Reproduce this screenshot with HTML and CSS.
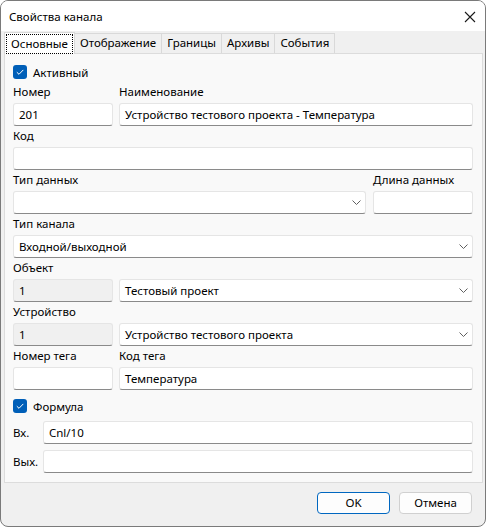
FILE: index.html
```html
<!DOCTYPE html>
<html lang="ru">
<head>
    <meta charset="UTF-8">
    <title>Свойства канала</title>
    <link rel="stylesheet" href="styles.css">
</head>
<body>
    <div class="window">
        <!-- Title bar -->
        <div class="titlebar">
            <span class="title">Свойства канала</span>
            <svg class="close" width="12" height="12" viewBox="0 0 12 12">
                <path d="M1 1 L11 11 M11 1 L1 11" stroke="#1a1a1a" stroke-width="1.1" fill="none"/>
            </svg>
        </div>

        <div class="client">
            <!-- Tabs -->
            <div class="tabs">
                <div class="tab active"><span class="focus">Основные</span></div>
                <div class="tab">Отображение</div>
                <div class="tab">Границы</div>
                <div class="tab">Архивы</div>
                <div class="tab">События</div>
            </div>

            <div class="panel">
                <div class="check">
                    <span class="box"><svg width="14" height="14" viewBox="0 0 14 14"><path d="M3.8 7.2 L6 9.3 L10.3 4.9" stroke="#fff" stroke-width="1" fill="none"/></svg></span>
                    <span>Активный</span>
                </div>

                <div class="row cols-left">
                    <div class="field">
                        <div class="lbl">Номер</div>
                        <div class="edit">201</div>
                    </div>
                    <div class="field">
                        <div class="lbl">Наименование</div>
                        <div class="edit">Устройство тестового проекта - Температура</div>
                    </div>
                </div>

                <div class="row">
                    <div class="field">
                        <div class="lbl">Код</div>
                        <div class="edit"></div>
                    </div>
                </div>

                <div class="row cols-right">
                    <div class="field">
                        <div class="lbl">Тип данных</div>
                        <div class="edit combo"><span></span><svg class="arrow" width="9" height="5" viewBox="0 0 9 5"><path d="M0.5 0.5 L4.5 4.5 L8.5 0.5" stroke="#606060" fill="none"/></svg></div>
                    </div>
                    <div class="field">
                        <div class="lbl">Длина данных</div>
                        <div class="edit"></div>
                    </div>
                </div>

                <div class="row">
                    <div class="field">
                        <div class="lbl">Тип канала</div>
                        <div class="edit combo"><span>Входной/выходной</span><svg class="arrow" width="9" height="5" viewBox="0 0 9 5"><path d="M0.5 0.5 L4.5 4.5 L8.5 0.5" stroke="#606060" fill="none"/></svg></div>
                    </div>
                </div>

                <div class="row cols-left">
                    <div class="field">
                        <div class="lbl">Объект</div>
                        <div class="edit disabled">1</div>
                    </div>
                    <div class="field">
                        <div class="lbl">&nbsp;</div>
                        <div class="edit combo"><span>Тестовый проект</span><svg class="arrow" width="9" height="5" viewBox="0 0 9 5"><path d="M0.5 0.5 L4.5 4.5 L8.5 0.5" stroke="#606060" fill="none"/></svg></div>
                    </div>
                </div>

                <div class="row cols-left">
                    <div class="field">
                        <div class="lbl">Устройство</div>
                        <div class="edit disabled">1</div>
                    </div>
                    <div class="field">
                        <div class="lbl">&nbsp;</div>
                        <div class="edit combo"><span>Устройство тестового проекта</span><svg class="arrow" width="9" height="5" viewBox="0 0 9 5"><path d="M0.5 0.5 L4.5 4.5 L8.5 0.5" stroke="#606060" fill="none"/></svg></div>
                    </div>
                </div>

                <div class="row cols-left">
                    <div class="field">
                        <div class="lbl">Номер тега</div>
                        <div class="edit"></div>
                    </div>
                    <div class="field">
                        <div class="lbl">Код тега</div>
                        <div class="edit">Температура</div>
                    </div>
                </div>

                <div class="check formula">
                    <span class="box"><svg width="14" height="14" viewBox="0 0 14 14"><path d="M3.8 7.2 L6 9.3 L10.3 4.9" stroke="#fff" stroke-width="1" fill="none"/></svg></span>
                    <span>Формула</span>
                </div>

                <div class="expr first">
                    <span class="expr-lbl">Вх.</span>
                    <div class="edit">Cnl/10</div>
                </div>
                <div class="expr">
                    <span class="expr-lbl">Вых.</span>
                    <div class="edit"></div>
                </div>
            </div>

            <!-- Dialog buttons -->
            <div class="buttons">
                <div class="btn default">OK</div>
                <div class="btn">Отмена</div>
            </div>
        </div>
    </div>
</body>
</html>
```

FILE: styles.css
```css
body {
    margin: 0;
    background: #ffffff;
    font-family: 'Noto Sans', 'Liberation Sans', sans-serif;
    font-size: 11.5px;
    color: #000000;
}
.window {
    box-sizing: border-box;
    width: 486px;
    height: 527px;
    border: 1px solid #7a7a7a;
    border-radius: 8px;
    overflow: hidden;
    background: #f0f0f0;
}
.titlebar {
    height: 30px;
    background: #ffffff;
    display: flex;
    align-items: center;
    justify-content: space-between;
    padding: 0 9px 0 8px;
}
.close {
    margin-top: 1px;
}
.client {
    padding-top: 1px;
}
.tabs {
    display: flex;
    align-items: flex-end;
    height: 21px;
    padding-left: 3px;
}
.tab {
    box-sizing: border-box;
    height: 20px;
    line-height: 18px;
    padding: 0 5px;
    border: 1px solid #d9d9d9;
    border-bottom: none;
    margin-left: -1px;
    background: #f0f0f0;
}
.tab.active {
    position: relative;
    z-index: 1;
    height: 22px;
    margin-bottom: -1px;
    margin-left: 0;
    padding: 1px 1px 0;
    background: #ffffff;
    border-color: #d9d9d9;
}
.tab .focus {
    display: block;
    height: 18px;
    line-height: 17px;
    padding: 0 4px;
    border: 1px dotted #000000;
}
.panel {
    box-sizing: border-box;
    height: 430px;
    margin: 0 2px 0 3px;
    padding: 10px 9px 9px 8px;
    background: #f9f9f9;
    border: 1px solid #dcdcdc;
}
.check {
    display: flex;
    align-items: center;
    height: 16px;
    line-height: 15px;
    gap: 6px;
}
.check .box {
    width: 14px;
    height: 14px;
    border-radius: 3px;
    background: #005fb8;
    display: flex;
}
.check.formula {
    margin-top: 8px;
}
.row {
    display: grid;
    grid-template-columns: 1fr;
    column-gap: 6px;
    margin-top: 2px;
}
.check + .row {
    margin-top: 4px;
}
.row.cols-left {
    grid-template-columns: 100px 1fr;
}
.row.cols-right {
    grid-template-columns: 1fr 100px;
    column-gap: 7px;
}
.lbl {
    height: 16px;
    line-height: 16px;
    margin-bottom: 3px;
    white-space: nowrap;
}
.edit {
    box-sizing: border-box;
    height: 23px;
    line-height: 21px;
    padding: 0 5px;
    background: #ffffff;
    border: 1px solid #e5e5e5;
    border-bottom-color: #8a8a8a;
    border-radius: 3px;
    white-space: nowrap;
    overflow: hidden;
}
.edit.disabled {
    background: #f0f0f0;
}
.edit.combo {
    display: flex;
    align-items: center;
    justify-content: space-between;
    padding-right: 4px;
}
.expr {
    display: flex;
    align-items: center;
    margin-top: 6px;
}
.expr.first {
    margin-top: 7px;
}
.expr-lbl {
    width: 30px;
}
.expr .edit {
    flex: 1;
}
.buttons {
    display: flex;
    justify-content: flex-end;
    gap: 9px;
    padding: 9px 13px 0 0;
}
.btn {
    box-sizing: border-box;
    width: 73px;
    height: 22px;
    line-height: 20px;
    text-align: center;
    background: #fdfdfd;
    border: 1px solid #d0d0d0;
    border-radius: 4px;
}
.btn.default {
    border-color: #0067c0;
}
```
